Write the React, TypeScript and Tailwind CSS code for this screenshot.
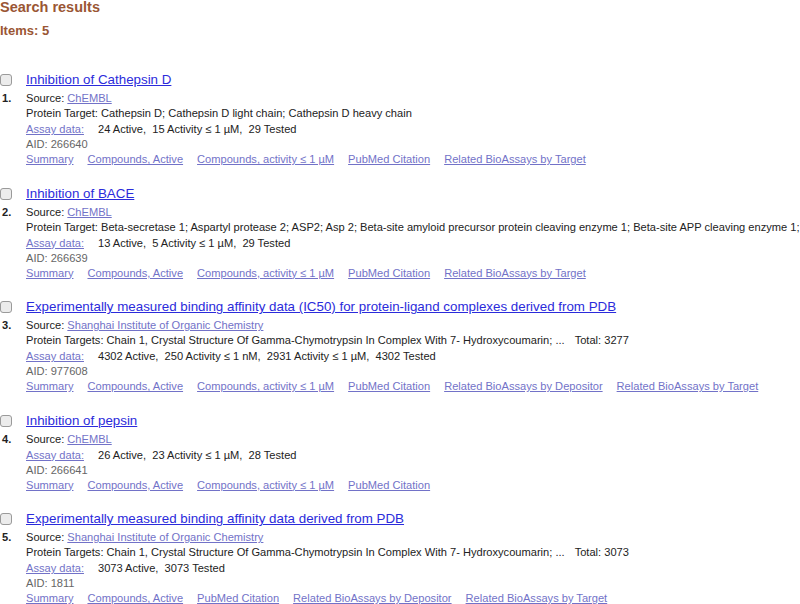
type Result = {
  title: string
  source: string
  target?: { label: string; text: string; total?: string }
  assay: string
  aid: string
  links: string[]
}

const results: Result[] = [
  {
    title: 'Inhibition of Cathepsin D',
    source: 'ChEMBL',
    target: { label: 'Protein Target:', text: 'Cathepsin D; Cathepsin D light chain; Cathepsin D heavy chain' },
    assay: '24 Active,  15 Activity ≤ 1 µM,  29 Tested',
    aid: '266640',
    links: ['Summary', 'Compounds, Active', 'Compounds, activity ≤ 1 µM', 'PubMed Citation', 'Related BioAssays by Target'],
  },
  {
    title: 'Inhibition of BACE',
    source: 'ChEMBL',
    target: {
      label: 'Protein Target:',
      text: 'Beta-secretase 1; Aspartyl protease 2; ASP2; Asp 2; Beta-site amyloid precursor protein cleaving enzyme 1; Beta-site APP cleaving enzyme 1; Memapsin-2; Membrane-associated aspartic protease 2',
    },
    assay: '13 Active,  5 Activity ≤ 1 µM,  29 Tested',
    aid: '266639',
    links: ['Summary', 'Compounds, Active', 'Compounds, activity ≤ 1 µM', 'PubMed Citation', 'Related BioAssays by Target'],
  },
  {
    title: 'Experimentally measured binding affinity data (IC50) for protein-ligand complexes derived from PDB',
    source: 'Shanghai Institute of Organic Chemistry',
    target: {
      label: 'Protein Targets:',
      text: 'Chain 1, Crystal Structure Of Gamma-Chymotrypsin In Complex With 7- Hydroxycoumarin; ...',
      total: '3277',
    },
    assay: '4302 Active,  250 Activity ≤ 1 nM,  2931 Activity ≤ 1 µM,  4302 Tested',
    aid: '977608',
    links: [
      'Summary',
      'Compounds, Active',
      'Compounds, activity ≤ 1 µM',
      'PubMed Citation',
      'Related BioAssays by Depositor',
      'Related BioAssays by Target',
    ],
  },
  {
    title: 'Inhibition of pepsin',
    source: 'ChEMBL',
    assay: '26 Active,  23 Activity ≤ 1 µM,  28 Tested',
    aid: '266641',
    links: ['Summary', 'Compounds, Active', 'Compounds, activity ≤ 1 µM', 'PubMed Citation'],
  },
  {
    title: 'Experimentally measured binding affinity data derived from PDB',
    source: 'Shanghai Institute of Organic Chemistry',
    target: {
      label: 'Protein Targets:',
      text: 'Chain 1, Crystal Structure Of Gamma-Chymotrypsin In Complex With 7- Hydroxycoumarin; ...',
      total: '3073',
    },
    assay: '3073 Active,  3073 Tested',
    aid: '1811',
    links: ['Summary', 'Compounds, Active', 'PubMed Citation', 'Related BioAssays by Depositor', 'Related BioAssays by Target'],
  },
]

function ResultItem({ item, index }: { item: Result; index: number }) {
  return (
    <li className="flex flex-col mb-[15.5px]">
      <div className="flex items-center h-[22px]">
        <span className="w-[12px] h-[12px] rounded-[3px] border border-[#9a9a9a] bg-[#ececec] shrink-0" />
        <a className="ml-[14px] text-[13.35px] leading-[22px] text-[#2b2bdb] underline whitespace-nowrap">{item.title}</a>
      </div>
      <div className="flex">
        <span className="w-[26px] shrink-0 pl-[2px] text-[11.1px] leading-[15px] font-bold text-[#222]">{index + 1}.</span>
        <div className="flex flex-col text-[11.1px] leading-[15px] text-[#222] whitespace-pre">
          <div>
            Source: <a className="text-[#7272c8] underline">{item.source}</a>
          </div>
          {item.target && (
            <div>
              {item.target.label} {item.target.text}
              {item.target.total && <span className="ml-[10px]">Total: {item.target.total}</span>}
            </div>
          )}
          <div className="flex gap-[14px] mt-[1px]">
            <a className="text-[#7272c8] underline">Assay data:</a>
            <span>{item.assay}</span>
          </div>
          <div className="text-[#666]">AID: {item.aid}</div>
          <div className="flex gap-[14px]">
            {item.links.map(link => (
              <a key={link} className="text-[#7272c8] underline">
                {link}
              </a>
            ))}
          </div>
        </div>
      </div>
    </li>
  )
}

export default function App() {
  return (
    <div className="w-[800px] h-[604px] overflow-hidden bg-white font-['Liberation_Sans',Arial,sans-serif]">
      <h1 className="text-[14.5px] leading-[14px] font-bold text-[#9a5634]">Search results</h1>
      <div className="mt-[9px] text-[13px] leading-[16px] font-bold text-[#9a5634]">Items: 5</div>
      <ol className="mt-[30px]">
        {results.map((item, i) => (
          <ResultItem key={item.aid} item={item} index={i} />
        ))}
      </ol>
    </div>
  )
}
